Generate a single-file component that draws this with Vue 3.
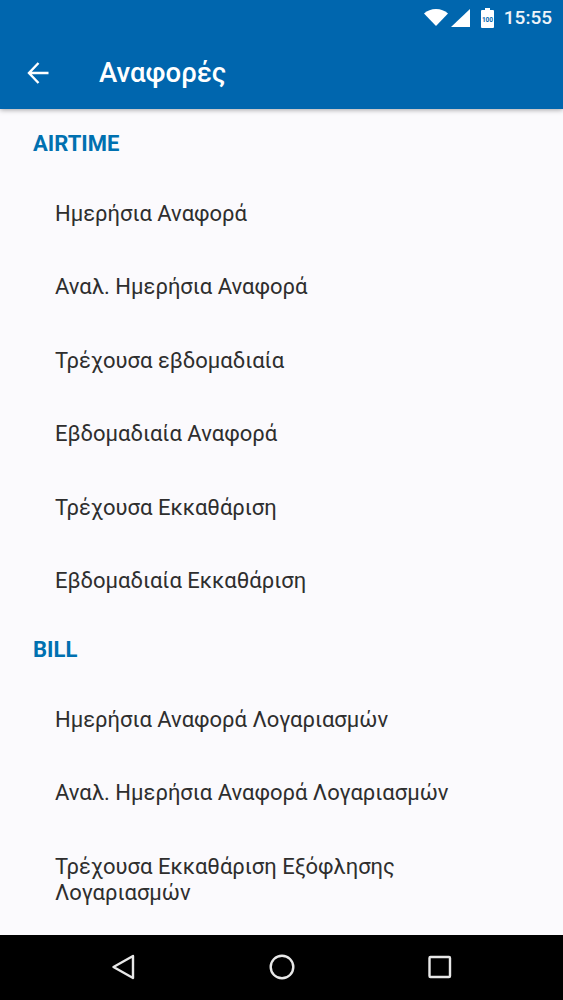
<script setup>
/**
 * App.vue
 * Reports list screen with app bar and system bars.
 */
const sections = [
  {
    title: 'AIRTIME',
    items: [
      'Ημερήσια Αναφορά',
      'Αναλ. Ημερήσια Αναφορά',
      'Τρέχουσα εβδομαδιαία',
      'Εβδομαδιαία Αναφορά',
      'Τρέχουσα Εκκαθάριση',
      'Εβδομαδιαία Εκκαθάριση'
    ]
  },
  {
    title: 'BILL',
    items: [
      'Ημερήσια Αναφορά Λογαριασμών',
      'Αναλ. Ημερήσια Αναφορά Λογαριασμών',
      'Τρέχουσα Εκκαθάριση Εξόφλησης Λογαριασμών'
    ]
  }
]
</script>

<template>
  <div class="screen">
    <header class="app-bar">
      <!-- Status bar -->
      <div class="status-bar">
        <svg class="wifi" width="24" height="17" viewBox="0 0 24 17">
          <path d="M0 4.500C3.200 1.600 7.400 0 12 0S20.800 1.600 24 4.500L12 17Z" fill="#fff" />
        </svg>
        <svg class="signal" width="19" height="18" viewBox="0 0 19 18">
          <path d="M19 0V18H0Z" fill="#fff" />
        </svg>
        <svg class="battery" width="13" height="20" viewBox="0 0 13 20">
          <path d="M4 0H9V2H12A1 1 0 0 1 13 3V19A1 1 0 0 1 12 20H1A1 1 0 0 1 0 19V3A1 1 0 0 1 1 2H4Z" fill="#fff" />
          <text x="6.500" y="14" text-anchor="middle" class="battery-text">100</text>
        </svg>
        <span class="clock">15:55</span>
      </div>
      <!-- Toolbar -->
      <div class="toolbar">
        <svg class="back" width="24" height="24" viewBox="0 0 24 24">
          <path d="M22.500 12H3M12.500 2L3 12L12.500 22" fill="none" stroke="#fff" stroke-width="2.400" />
        </svg>
        <h1 class="title">Αναφορές</h1>
      </div>
    </header>

    <main class="content">
      <section v-for="section in sections" :key="section.title" class="section">
        <h2 class="section-title">{{ section.title }}</h2>
        <div v-for="item in section.items" :key="item" class="item">{{ item }}</div>
      </section>
    </main>

    <!-- Navigation bar -->
    <nav class="nav-bar">
      <svg width="24" height="26" viewBox="0 0 24 26">
        <path d="M21 2L1.500 13L21 24Z" fill="none" stroke="#e8e8e8" stroke-width="2.400" stroke-linejoin="round" />
      </svg>
      <svg width="26" height="26" viewBox="0 0 26 26">
        <circle cx="13" cy="13" r="11.300" fill="none" stroke="#e8e8e8" stroke-width="2.400" />
      </svg>
      <svg width="24" height="24" viewBox="0 0 24 24">
        <rect x="1.500" y="2" width="20.500" height="20" rx="1" fill="none" stroke="#e8e8e8" stroke-width="2.400" />
      </svg>
    </nav>
  </div>
</template>

<style>
html, body { margin: 0; padding: 0; }
</style>

<style scoped>
.screen { width: 563px; height: 1000px; display: flex; flex-direction: column; background: #fbfafd; font-family: Roboto, sans-serif; overflow: hidden; }
.app-bar { height: 109px; flex: none; background: #0066ae; box-shadow: 0 1px 5px rgba(0, 0, 0, 0.35); position: relative; z-index: 1; }
.status-bar { height: 36px; display: flex; align-items: center; justify-content: flex-end; padding: 0 11px 1px 0; box-sizing: border-box; color: #fff; }
.wifi { margin-right: 3px; }
.signal { margin-right: 11px; }
.battery { margin-right: 10px; }
.battery-text { font-size: 6.500px; font-weight: 700; fill: #0066ae; font-family: Roboto, sans-serif; }
.clock { font-size: 19px; font-weight: 500; color: #eef4f9; }
.toolbar { height: 73px; display: flex; align-items: center; padding-left: 26px; }
.back { margin-right: 49px; }
.title { margin: 0; font-size: 27.500px; font-weight: 500; color: #fff; }
.content { flex: 1; min-height: 0; overflow: hidden; padding-top: 2px; }
.section-title { margin: 0; height: 65px; padding-left: 33px; display: flex; align-items: center; font-size: 22px; font-weight: 700; color: #0070b0; box-sizing: border-box; }
.item { min-height: 73.500px; padding: 24.500px 60px 22.500px 55px; box-sizing: border-box; display: flex; align-items: center; font-size: 22px; line-height: 26px; color: #2e2e2e; }
.nav-bar { height: 65px; flex: none; background: #000; display: flex; align-items: center; justify-content: space-between; padding: 0 111px 2px 112px; box-sizing: border-box; }
</style>
